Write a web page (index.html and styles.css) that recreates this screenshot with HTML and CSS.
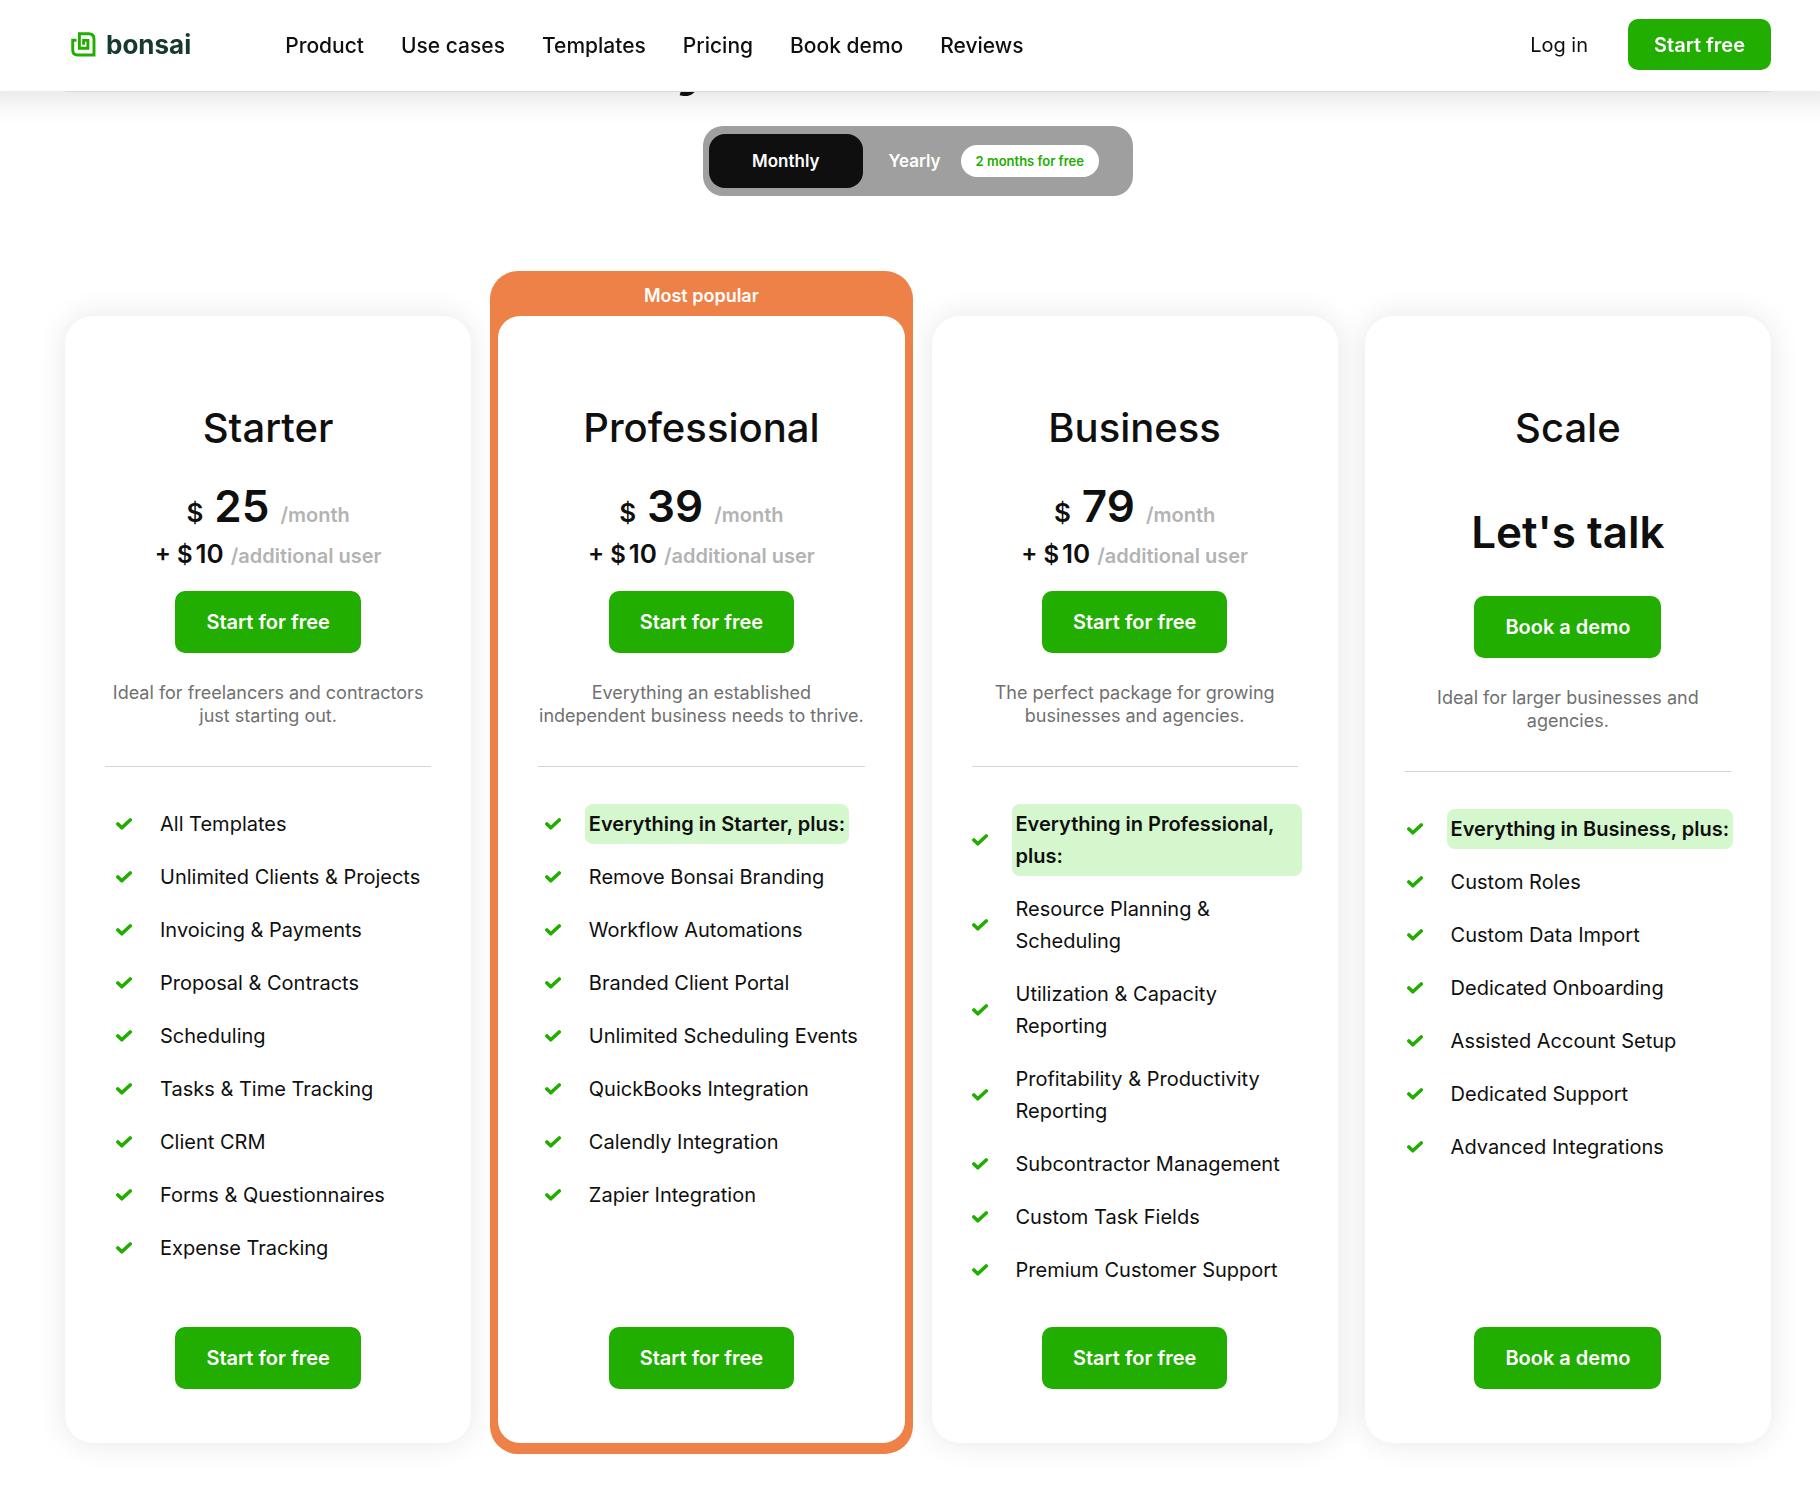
FILE: index.html
```
<!DOCTYPE html>
<html lang="en">

<head>
    <meta charset="utf-8">
    <title>Bonsai Pricing</title>
    <link rel="stylesheet" href="styles.css">
</head>

<body>
    <svg class="sprite" aria-hidden="true">
        <symbol id="check" viewBox="0 0 16 12">
            <path d="M1.900 6 5.800 9.800 14.200 2" fill="none" stroke="currentColor" stroke-width="3.600" stroke-linecap="round" stroke-linejoin="round" />
        </symbol>
    </svg>

    <header class="header">
        <div class="header-inner">
            <a class="logo" href="#">
                <svg class="logo-icon" viewBox="0 0 25 25" aria-hidden="true">
                    <path d="M5.500 8.200H1.700V18q0 5 5 5H23V7q0-5.300-5.300-5.300H8.400V16.300H16.900V8.400H12.600V12.800" fill="none" stroke="#22ad01" stroke-width="2.900" />
                </svg>
                <span>bonsai</span>
            </a>
            <nav class="nav">
                <a href="#">Product</a>
                <a href="#">Use cases</a>
                <a href="#">Templates</a>
                <a href="#">Pricing</a>
                <a href="#">Book demo</a>
                <a href="#">Reviews</a>
            </nav>
            <a class="login" href="#">Log in</a>
            <button class="btn btn-small" type="button">Start free</button>
        </div>
    </header>

    <main class="page">
        <h1 class="page-title">Ready to start with Bonsai?</h1>

        <div class="billing">
            <button class="billing-option active" type="button">Monthly</button>
            <button class="billing-option" type="button">Yearly <span class="billing-badge">2 months for free</span></button>
        </div>

        <div class="plans">
            <section class="plan">
                <h2 class="plan-name">Starter</h2>
                <div class="plan-price">
                    <p class="price"><span class="currency">$</span><span class="amount">25</span><span class="unit">/month</span></p>
                    <p class="extra"><span class="plus">+ $</span><span class="extra-amount">10</span><span class="unit">/additional user</span></p>
                </div>
                <button class="btn" type="button">Start for free</button>
                <p class="plan-text">Ideal for freelancers and contractors just starting out.</p>
                <ul class="features">
                    <li><svg class="check"><use href="#check" /></svg><span>All Templates</span></li>
                    <li><svg class="check"><use href="#check" /></svg><span>Unlimited Clients &amp; Projects</span></li>
                    <li><svg class="check"><use href="#check" /></svg><span>Invoicing &amp; Payments</span></li>
                    <li><svg class="check"><use href="#check" /></svg><span>Proposal &amp; Contracts</span></li>
                    <li><svg class="check"><use href="#check" /></svg><span>Scheduling</span></li>
                    <li><svg class="check"><use href="#check" /></svg><span>Tasks &amp; Time Tracking</span></li>
                    <li><svg class="check"><use href="#check" /></svg><span>Client CRM</span></li>
                    <li><svg class="check"><use href="#check" /></svg><span>Forms &amp; Questionnaires</span></li>
                    <li><svg class="check"><use href="#check" /></svg><span>Expense Tracking</span></li>
                </ul>
                <button class="btn" type="button">Start for free</button>
            </section>

            <div class="popular">
                <p class="popular-label">Most popular</p>
                <section class="plan">
                    <h2 class="plan-name">Professional</h2>
                    <div class="plan-price">
                        <p class="price"><span class="currency">$</span><span class="amount">39</span><span class="unit">/month</span></p>
                        <p class="extra"><span class="plus">+ $</span><span class="extra-amount">10</span><span class="unit">/additional user</span></p>
                    </div>
                    <button class="btn" type="button">Start for free</button>
                    <p class="plan-text">Everything an established<br>independent business needs to thrive.</p>
                    <ul class="features">
                        <li><svg class="check"><use href="#check" /></svg><strong class="highlight">Everything in Starter, plus:</strong></li>
                        <li><svg class="check"><use href="#check" /></svg><span>Remove Bonsai Branding</span></li>
                        <li><svg class="check"><use href="#check" /></svg><span>Workflow Automations</span></li>
                        <li><svg class="check"><use href="#check" /></svg><span>Branded Client Portal</span></li>
                        <li><svg class="check"><use href="#check" /></svg><span>Unlimited Scheduling Events</span></li>
                        <li><svg class="check"><use href="#check" /></svg><span>QuickBooks Integration</span></li>
                        <li><svg class="check"><use href="#check" /></svg><span>Calendly Integration</span></li>
                        <li><svg class="check"><use href="#check" /></svg><span>Zapier Integration</span></li>
                    </ul>
                    <button class="btn" type="button">Start for free</button>
                </section>
            </div>

            <section class="plan">
                <h2 class="plan-name">Business</h2>
                <div class="plan-price">
                    <p class="price"><span class="currency">$</span><span class="amount">79</span><span class="unit">/month</span></p>
                    <p class="extra"><span class="plus">+ $</span><span class="extra-amount">10</span><span class="unit">/additional user</span></p>
                </div>
                <button class="btn" type="button">Start for free</button>
                <p class="plan-text">The perfect package for growing businesses and agencies.</p>
                <ul class="features">
                    <li><svg class="check"><use href="#check" /></svg><strong class="highlight">Everything in Professional, plus:</strong></li>
                    <li><svg class="check"><use href="#check" /></svg><span>Resource Planning &amp; Scheduling</span></li>
                    <li><svg class="check"><use href="#check" /></svg><span>Utilization &amp; Capacity Reporting</span></li>
                    <li><svg class="check"><use href="#check" /></svg><span>Profitability &amp; Productivity Reporting</span></li>
                    <li><svg class="check"><use href="#check" /></svg><span>Subcontractor Management</span></li>
                    <li><svg class="check"><use href="#check" /></svg><span>Custom Task Fields</span></li>
                    <li><svg class="check"><use href="#check" /></svg><span>Premium Customer Support</span></li>
                </ul>
                <button class="btn" type="button">Start for free</button>
            </section>

            <section class="plan">
                <h2 class="plan-name">Scale</h2>
                <div class="plan-price plan-price-talk">
                    <p class="amount">Let's talk</p>
                </div>
                <button class="btn" type="button">Book a demo</button>
                <p class="plan-text">Ideal for larger businesses and agencies.</p>
                <ul class="features">
                    <li><svg class="check"><use href="#check" /></svg><strong class="highlight">Everything in Business, plus:</strong></li>
                    <li><svg class="check"><use href="#check" /></svg><span>Custom Roles</span></li>
                    <li><svg class="check"><use href="#check" /></svg><span>Custom Data Import</span></li>
                    <li><svg class="check"><use href="#check" /></svg><span>Dedicated Onboarding</span></li>
                    <li><svg class="check"><use href="#check" /></svg><span>Assisted Account Setup</span></li>
                    <li><svg class="check"><use href="#check" /></svg><span>Dedicated Support</span></li>
                    <li><svg class="check"><use href="#check" /></svg><span>Advanced Integrations</span></li>
                </ul>
                <button class="btn" type="button">Book a demo</button>
            </section>
        </div>
    </main>
</body>

</html>
```
FILE: styles.css
```
* {
    box-sizing: border-box;
}

body {
    margin: 0;
    background-color: #fff;
    color: #0f0f0f;
    font-family: Inter, "Open Sans", Arial, sans-serif;
    font-size: 20px;
}

h1, h2, p, ul {
    margin: 0;
    padding: 0;
}

a {
    color: inherit;
    text-decoration: none;
}

button {
    border: 0;
    font-family: inherit;
    cursor: pointer;
}

.sprite {
    display: none;
}

.header {
    position: fixed;
    top: 0;
    left: 0;
    right: 0;
    z-index: 1;
    padding: 0 49px 0 65px;
    background-color: #fff;
    box-shadow: 0 -15px 25px 25px rgba(0, 0, 0, 0.1);
}

.header-inner {
    display: flex;
    align-items: center;
    height: 91px;
    padding: 0 0 2px 6px;
    box-shadow: 0 1px 0 #d9d9d9;
}

.logo {
    display: flex;
    align-items: center;
    gap: 10px;
    color: #173a30;
    font-size: 26px;
    font-weight: 700;
}

.logo-icon {
    width: 25px;
    height: 25px;
}

.nav {
    display: flex;
    gap: 37px;
    flex: 1;
    margin-left: 94px;
    padding-top: 2px;
    font-size: 21px;
    font-weight: 500;
}

.login {
    margin-right: 40px;
}

.btn {
    height: 62px;
    padding: 0 31px;
    border-radius: 10px;
    background-color: #22ad01;
    color: #fff;
    font-size: 20px;
    font-weight: 600;
}

.btn-small {
    height: 51px;
    padding: 0 26px;
}

.page {
    display: flex;
    flex-direction: column;
    align-items: center;
    padding: 30px 49px 36px 65px;
}

.page-title {
    font-size: 58px;
    line-height: 66px;
}

.billing {
    display: flex;
    align-items: center;
    margin-top: 30px;
    padding: 8px 6px;
    border-radius: 20px;
    background-color: #9f9f9f;
}

.billing-option {
    display: flex;
    align-items: center;
    gap: 20px;
    height: 54px;
    padding: 0 28px 0 26px;
    border-radius: 16px;
    background-color: transparent;
    color: #fff;
    font-size: 17px;
    font-weight: 600;
}

.billing-option.active {
    padding: 0 43px;
    background-color: #0f0f0f;
}

.billing-badge {
    padding: 0 15px;
    border-radius: 16px;
    background-color: #fff;
    color: #22ad01;
    font-size: 13px;
    line-height: 32px;
}

.plans {
    display: grid;
    grid-template-columns: repeat(4, minmax(0, 1fr));
    gap: 27px;
    width: 100%;
    margin-top: 120px;
}

.plan {
    display: flex;
    flex-direction: column;
    align-items: center;
    flex: 1;
    padding: 84px 40px 54px;
    border-radius: 28px;
    background-color: #fff;
    box-shadow: 0 0 30px rgba(0, 0, 0, 0.1);
}

/* orange frame hangs out of its grid cell on every side */
.popular {
    display: flex;
    flex-direction: column;
    margin: -45px -8px -11px;
    padding: 0 8px 11px;
    border-radius: 28px;
    background-color: #ee8148;
}

.popular .plan {
    border-radius: 22px;
    box-shadow: none;
}

.popular-label {
    padding-top: 4px;
    color: #fff;
    font-size: 18px;
    font-weight: 600;
    line-height: 41px;
    text-align: center;
}

.plan-name {
    font-size: 40px;
    font-weight: 500;
    line-height: 56px;
}

.plan-price {
    height: 135px;
    padding-top: 27px;
    font-weight: 600;
}

.price, .extra {
    display: flex;
    align-items: baseline;
    justify-content: center;
}

.price {
    gap: 11px;
    line-height: 46px;
}

.extra {
    gap: 3px;
    line-height: 32px;
}

.currency {
    font-size: 26px;
}

.amount {
    font-size: 44px;
    font-weight: 600;
}

.plus {
    font-size: 24px;
}

.extra-amount {
    margin-right: 4px;
    font-size: 26px;
}

.unit {
    color: #b3b3b3;
    font-size: 20px;
}

.plan-price-talk {
    display: flex;
    align-items: center;
    height: 140px;
    padding: 12px 0 0;
}

.plan-text {
    width: 100%;
    padding: 28px 0 39px;
    border-bottom: 1px solid #cfd8d5;
    color: #707070;
    font-size: 18px;
    line-height: 23px;
    text-align: center;
}

.features {
    display: flex;
    flex-direction: column;
    gap: 21px;
    margin-bottom: auto;
    padding: 41px 0;
    line-height: 32px;
    list-style: none;
}

.features li {
    display: flex;
    align-items: center;
    gap: 28px;
}

.check {
    flex: none;
    width: 16px;
    height: 12px;
    color: #22ad01;
}

.highlight {
    margin: -4px;
    padding: 4px;
    border-radius: 8px;
    background-color: #d5f7cd;
    font-weight: 600;
}
```
